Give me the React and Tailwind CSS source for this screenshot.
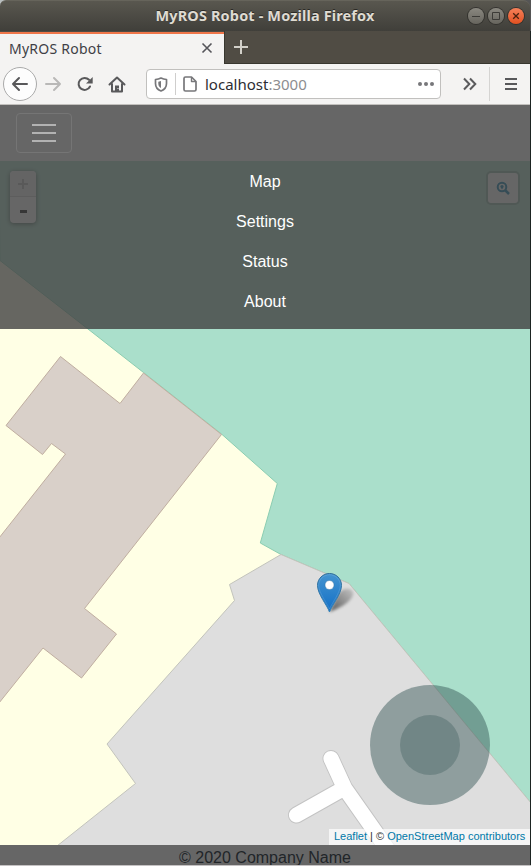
import React from 'react';

function TitleBar() {
  return (
    <header className="relative h-[31px] w-[530px] rounded-tl-[6px] rounded-tr-[7px] border-t border-[#66645b] bg-linear-to-b from-[#59574f] to-[#403f3a] font-['Noto_Sans',sans-serif]">
      <h1 className="pt-[2px] text-center text-[14.5px] leading-[24px] font-bold tracking-[0.14px] text-[#dfdbd2] [text-shadow:0_-1px_0_#2a2925]">
        MyROS Robot - Mozilla Firefox
      </h1>
      <div className="absolute top-[7px] right-[6px] flex gap-1">
        <span className="flex size-4 items-center justify-center rounded-full bg-linear-to-b from-[#8a8880] to-[#67655e] shadow-[0_0_0_1px_#33322e]">
          <svg width="16" height="16" stroke="#3c3b37" strokeWidth="1"><path d="M4 8.5h8" /></svg>
        </span>
        <span className="flex size-4 items-center justify-center rounded-full bg-linear-to-b from-[#8a8880] to-[#67655e] shadow-[0_0_0_1px_#33322e]">
          <svg width="16" height="16" fill="none" stroke="#3c3b37" strokeWidth="1"><path d="M4.500 4.500h7v7h-7z" /></svg>
        </span>
        <span className="flex size-4 items-center justify-center rounded-full bg-linear-to-b from-[#f58058] to-[#e2501e] shadow-[0_0_0_1px_#33322e]">
          <svg width="16" height="16" stroke="#49210f" strokeWidth="1.300"><path d="M5.200 5.200l5.600 5.600M10.800 5.200l-5.600 5.600" /></svg>
        </span>
      </div>
    </header>
  );
}

function TabStrip() {
  return (
    <div className="flex h-[33px] w-[530px] border-b border-[#38372f] bg-[#504c44] font-['Noto_Sans',sans-serif]">
      <div className="mt-px flex h-8 w-[224px] items-center justify-between border-t-2 border-[#f0764a] bg-[#f4f3f2] pr-[11px] pb-[2px] pl-[9px]">
        <span className="text-[14px] tracking-[0.25px] text-[#3f3f46]">MyROS Robot</span>
        <svg width="12" height="12" stroke="#55555a" strokeWidth="1.600"><path d="M1.500 1.500l9 9M10.500 1.500l-9 9" /></svg>
      </div>
      <div className="flex w-[33px] items-center justify-center border-l border-[#38372f]">
        <svg width="16" height="16" stroke="#d2d0c9" strokeWidth="2"><path d="M1 8h14M8 1v14" /></svg>
      </div>
    </div>
  );
}

function Toolbar() {
  return (
    <div className="flex h-[41px] w-[530px] items-center border-b border-[#c2c0bd] bg-[#f4f3f2] font-['Noto_Sans',sans-serif]">
      <div className="ml-[3px] flex size-[34px] items-center justify-center rounded-full border border-[#aaa] bg-[#fdfdfd]">
        <svg width="18" height="16" fill="none" stroke="#58585a" strokeWidth="2" strokeLinecap="round" strokeLinejoin="round"><path d="M16 8H2M8 2L2 8l6 6" /></svg>
      </div>
      <svg className="ml-[7px]" width="18" height="16" fill="none" stroke="#b9b8b7" strokeWidth="2" strokeLinecap="round" strokeLinejoin="round"><path d="M2 8h14M10 2l6 6-6 6" /></svg>
      <svg className="ml-[15px]" width="18" height="16" fill="none" stroke="#59595b" strokeWidth="2" strokeLinecap="round"><path d="M13 10.500A6 6 0 1 1 12 3.800" /><path d="M15.700 1v6.500H9z" fill="#59595b" stroke="none" /></svg>
      <svg className="ml-[13px]" width="18" height="17" fill="none" stroke="#59595b" strokeWidth="2" strokeLinejoin="round" strokeLinecap="round"><path d="M1.500 8.500L9 1.500l7.500 7M4 8v7.500h10V8" /><path d="M7 15v-5.500h4V15z" fill="#59595b" stroke="none" /><circle cx="10" cy="12.500" r=".6" fill="#fff" stroke="none" /></svg>
      <div className="ml-5 flex h-[30px] w-[295px] items-center rounded-[4px] border border-[#c1c0be] bg-white">
        <svg className="ml-[7px]" width="14" height="15" fill="none" stroke="#77777a" strokeWidth="1.700" strokeLinejoin="round"><path d="M1.500 2.500Q4.500 2.300 7 1Q9.500 2.300 12.500 2.500V6.500C12.500 10.500 10.300 12.700 7 14C3.700 12.700 1.500 10.500 1.500 6.500z" /><path d="M7 4v7C5.200 10 4.300 8.500 4.300 6.500V4.700z" fill="#77777a" stroke="none" /></svg>
        <span className="ml-[7px] h-[22px] w-px bg-[#cfcecd]" />
        <svg className="ml-[7px]" width="14" height="16" fill="none" stroke="#77777a" strokeWidth="1.700" strokeLinejoin="round"><path d="M2.500 1h6L13 5.500V13.500q0 1.500-1.500 1.500h-9Q1 15 1 13.500v-11Q1 1 2.500 1z" /><path d="M8.500 1v4.500H13" strokeWidth="1.400" /></svg>
        <span className="ml-[8px] text-[15px] text-[#2d2d33]">localhost<span className="text-[#8d8d90]">:3000</span></span>
        <svg className="mr-[5px] ml-auto" width="18" height="6" fill="#77777a"><circle cx="3" cy="3" r="2" /><circle cx="9" cy="3" r="2" /><circle cx="15" cy="3" r="2" /></svg>
      </div>
      <svg className="ml-[21px]" width="15" height="14" fill="none" stroke="#5b5b5d" strokeWidth="2"><path d="M2 1.500L7.300 7 2 12.500M8 1.500L13.300 7 8 12.500" /></svg>
      <span className="ml-[12px] h-[34px] w-px bg-[#d5d4d2]" />
      <svg className="ml-[15px]" width="12" height="14" stroke="#58585a" strokeWidth="2"><path d="M0 2h12M0 7h12M0 12h12" /></svg>
    </div>
  );
}

function MapTiles() {
  return (
    <svg className="block" width="530" height="684" viewBox="0 161 530 684">
      <rect y="161" width="530" height="684" fill="#ffffe5" />
      <path d="M0 260.500L88 329 143.500 372.500 221.500 434 277.300 483.500 260.300 543 281 554.500 349 583.500 531 803V160H-1z" fill="#aadfcb" stroke="#8bcdb1" />
      <path d="M60.500 356.500L120 403.500 143.500 373 221.500 434.500 84.500 608.500 116.500 634 81.500 678 43 648 -1 703V538L65.500 454 51.500 443.500 42.500 454.500 6 425.500z" fill="#d9d0c9" stroke="#c0aea0" />
      <path d="M57 846L135.500 783.500 107 744 234.500 600.500 229.500 584.500 281 554.500 349 583.500 531 803V846z" fill="#dedede" stroke="#c3c4bc" />
      <g fill="none" strokeLinecap="round" strokeLinejoin="round">
        <path d="M331 758.500L344.500 788 388 850M344.500 788L296.500 815" stroke="#c3c3c3" strokeWidth="17" />
        <path d="M331 758.500L344.500 788 388 850M344.500 788L296.500 815" stroke="#fff" strokeWidth="15.200" />
      </g>
    </svg>
  );
}

function Marker() {
  return (
    <svg className="absolute top-[411px] left-[316px]" width="43" height="43" viewBox="0 0 43 43">
      <defs>
        <linearGradient id="pin" x1="0" y1="0" x2="0" y2="1"><stop stopColor="#4494d0" /><stop offset="1" stopColor="#126fc6" /></linearGradient>
        <linearGradient id="rim" x1="0" y1="0" x2="0" y2="1"><stop stopColor="#2e6c97" /><stop offset="1" stopColor="#3883b7" /></linearGradient>
        <linearGradient id="fade" x1="0" y1="1" x2="1" y2="0"><stop stopOpacity=".6" /><stop offset="1" stopOpacity=".12" /></linearGradient>
        <filter id="soft" x="-30%" y="-30%" width="160%" height="160%"><feGaussianBlur stdDeviation="1.8" /></filter>
      </defs>
      <path d="M13.500 40L22 22Q28 15 35 17.500Q40 21 34 28Q29 34 13.500 40z" fill="url(#fade)" filter="url(#soft)" />
      <path d="M13.500 40C11 33 1.500 22 1.500 13.500C1.500 6.500 7 1.500 13.500 1.500S25.500 6.500 25.500 13.500C25.500 22 16 33 13.500 40z" fill="url(#pin)" stroke="url(#rim)" />
      <path d="M13.500 37C11 31 2.700 20.500 2.700 13.500C2.700 7.500 7.500 2.700 13.500 2.700S24.300 7.500 24.300 13.500C24.300 20.500 16 31 13.500 37z" fill="none" stroke="#fff" strokeOpacity=".12" />
      <circle cx="13.500" cy="13" r="4.500" fill="#fff" stroke="#2e6c97" strokeOpacity=".6" strokeWidth=".7" />
    </svg>
  );
}

function MapView() {
  return (
    <main className="relative h-[684px] w-[530px] overflow-hidden">
      <MapTiles />
      <Marker />
      <div className="absolute top-[10px] left-[10px] w-[26px] rounded-[4px] bg-white shadow-[0_1px_5px_rgba(0,0,0,0.65)]">
        <div className="flex h-[26px] items-center justify-center rounded-t-[4px] border-b border-[#ccc] bg-[#f4f4f4]">
          <svg width="10" height="10" stroke="#bbb" strokeWidth="2"><path d="M0 5h10M5 0v10" /></svg>
        </div>
        <div className="flex h-[26px] items-center justify-center pt-[3px] pl-[1px]">
          <svg width="7" height="3"><rect width="7" height="3" /></svg>
        </div>
      </div>
      <div className="absolute top-[10px] right-[10px] flex size-[34px] items-center justify-center rounded-[5px] border-2 border-black/20 bg-white bg-clip-padding">
        <svg width="14" height="14" fill="none" stroke="#0078a8" strokeWidth="2"><circle cx="6" cy="6" r="4.300" /><path d="M9 9l4 4" strokeWidth="2.500" /><path d="M6 8.500L4.300 5.800a1.700 1.700 0 1 1 3.400 0z" fill="#0078a8" stroke="none" /></svg>
      </div>
      <div className="absolute top-[524px] left-[370px] flex size-[120px] items-center justify-center rounded-full bg-[#2f4f4f]/45">
        <div className="size-[60px] rounded-full bg-[#2f4f4f]/30" />
      </div>
      <div className="absolute right-0 bottom-0 h-4 w-[201px] bg-white/70 pl-[5px] font-['Liberation_Sans',sans-serif] text-[11px] leading-[15px] whitespace-nowrap text-[#333]">
        <a className="text-[#0078a8]">Leaflet</a> | © <a className="text-[#0078a8]">OpenStreetMap contributors</a>
      </div>
      <nav className="absolute inset-x-0 top-0 h-[168px] bg-[#424242]/81 pt-px font-['Liberation_Sans',sans-serif]">
        <ul className="text-center text-base leading-10 text-white">
          <li>Map</li>
          <li>Settings</li>
          <li>Status</li>
          <li>About</li>
        </ul>
      </nav>
    </main>
  );
}

export default function App() {
  return (
    <div className="h-[866px] w-[531px] overflow-hidden bg-[#1d2422]">
      <div className="bg-linear-to-r from-[#b9bebf] from-[152px] to-[#555] to-[152px]">
        <TitleBar />
      </div>
      <TabStrip />
      <Toolbar />
      <div className="flex h-14 w-[530px] items-center bg-[#666] pl-4">
        <button className="flex h-10 w-14 items-center justify-center rounded-[4px] border border-[#757575]">
          <svg width="24" height="20" stroke="#b2b2b2" strokeWidth="2"><path d="M0 2h24M0 10h24M0 18h24" /></svg>
        </button>
      </div>
      <MapView />
      <footer className="h-5 w-[530px] overflow-hidden bg-[#666] pt-px text-center font-['Liberation_Sans',sans-serif] text-base leading-6 text-[#212529]">
        © 2020 Company Name
      </footer>
      <div className="h-px bg-[#c5c2c3]" />
    </div>
  );
}
